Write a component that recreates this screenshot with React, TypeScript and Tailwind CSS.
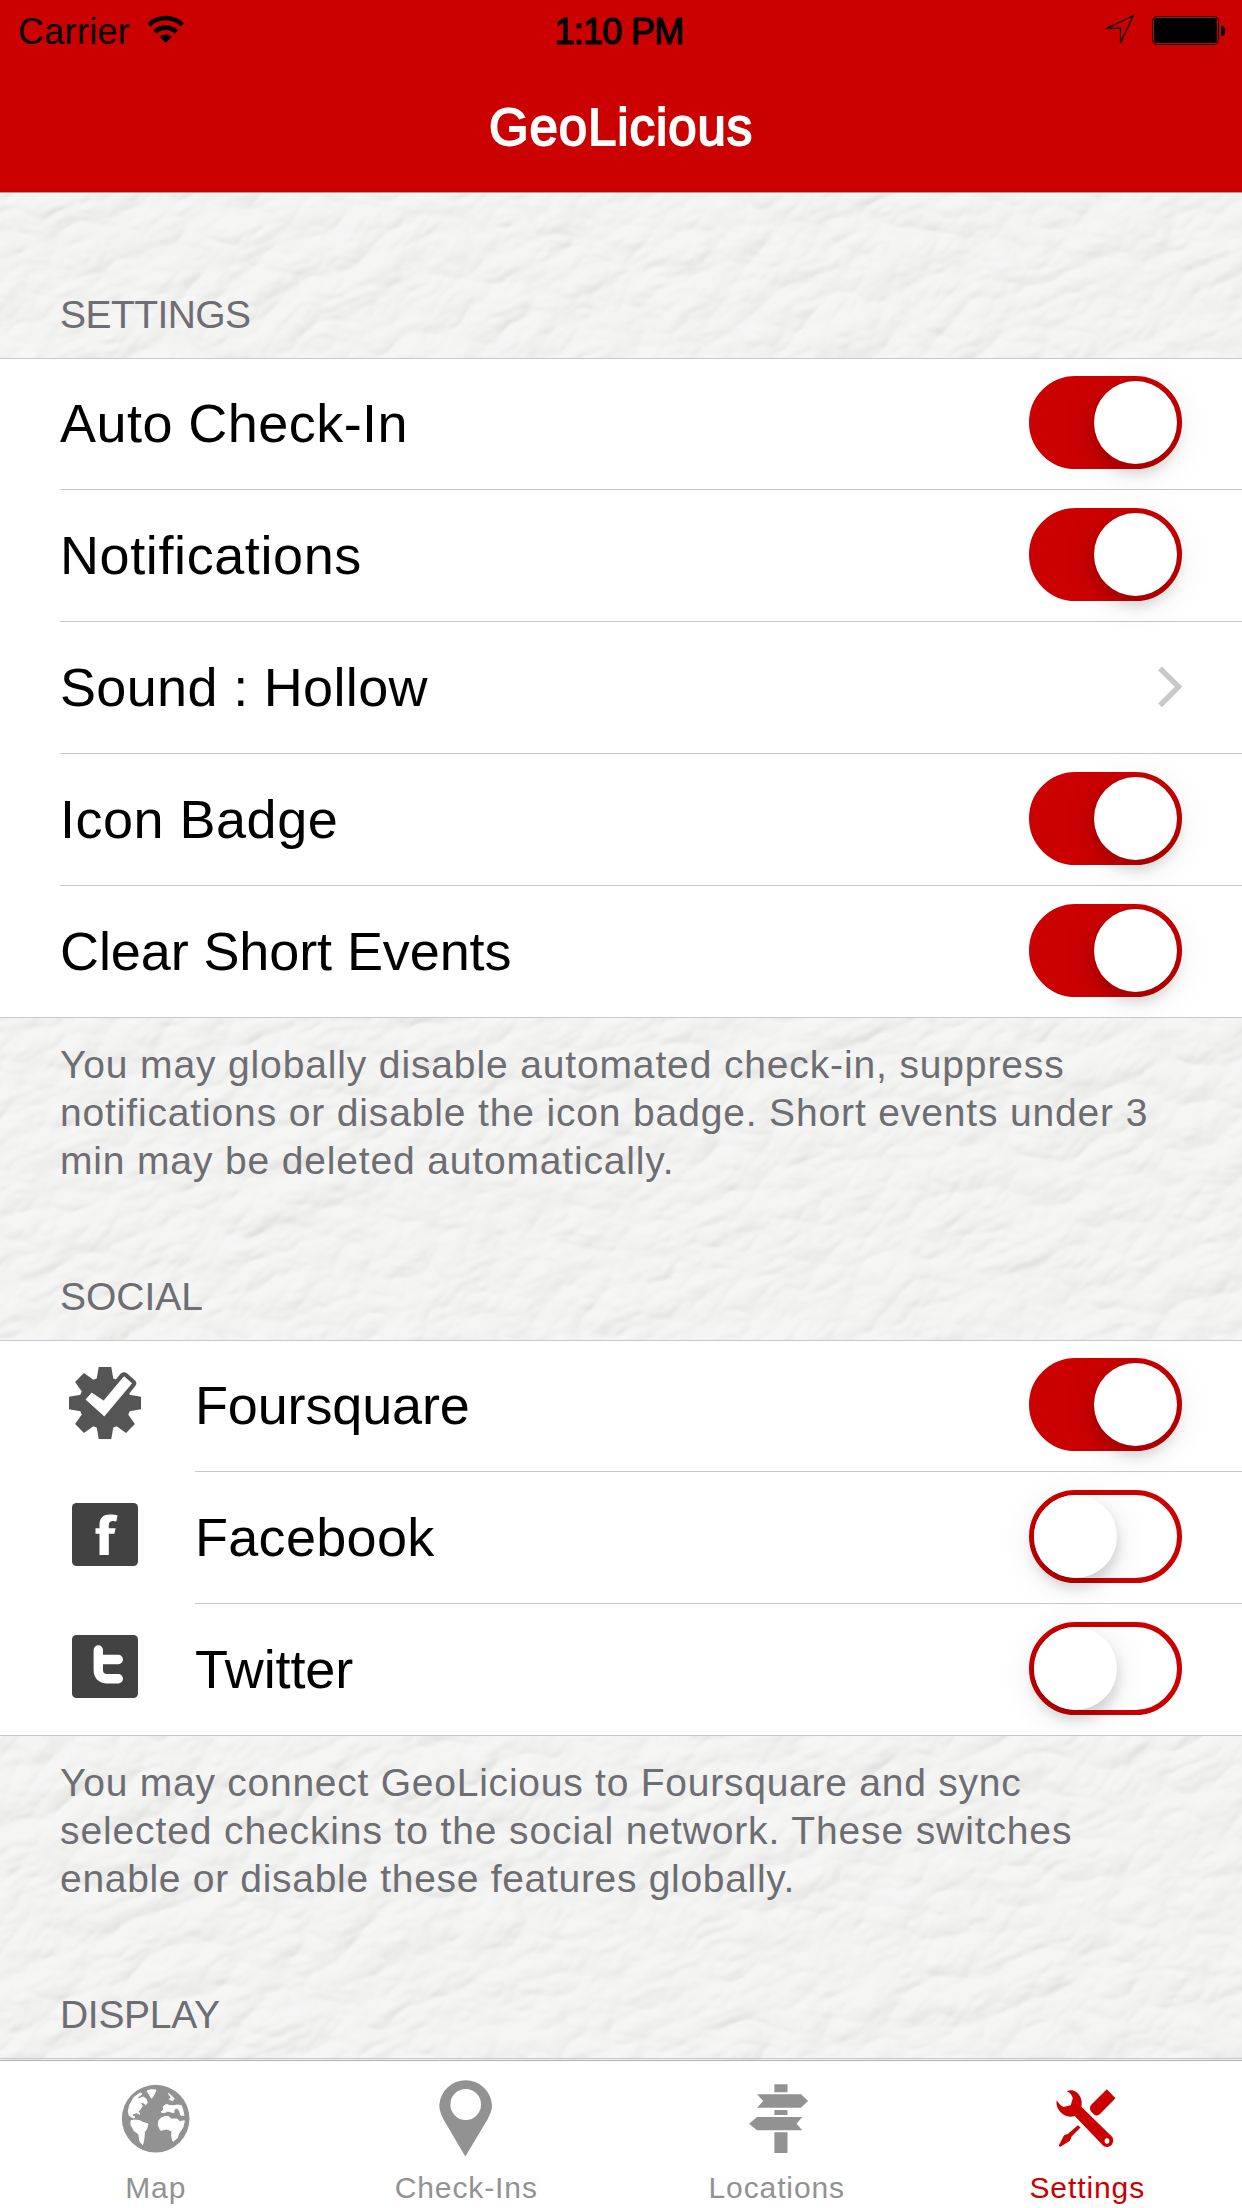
import { useState, type ReactNode } from "react";

function Leather() {
  return (
    <svg className="absolute inset-0 h-full w-full" aria-hidden="true">
      <defs>
        <filter id="leather" x="0" y="0" width="100%" height="100%" colorInterpolationFilters="sRGB">
          <feTurbulence type="turbulence" baseFrequency="0.013 0.022" numOctaves={3} seed={7} result="noise" />
          <feGaussianBlur in="noise" stdDeviation="1.4" />
          <feDiffuseLighting surfaceScale={4.5} diffuseConstant={1.0} lightingColor="#feffff">
            <feDistantLight azimuth={265} elevation={70} />
          </feDiffuseLighting>
        </filter>
      </defs>
      <rect width="100%" height="100%" fill="#f4f4f3" />
      <g transform="rotate(-22 621 1104)" opacity="0.22">
        <rect x="-500" y="-300" width="2300" height="2900" filter="url(#leather)" />
      </g>
    </svg>
  );
}

function StatusBar() {
  return (
    <div className="flex h-[60px] items-start justify-between text-4xl leading-[44px] text-black">
      <div className="flex w-[414px] pl-[18px] pt-[10px]">
        <span className="tracking-[0.3px]">Carrier</span>
        <svg className="ml-[17px] mt-[5px]" width="38" height="30" viewBox="0 0 38 30" fill="none">
          <path d="M2 9.9A23.7 23.7 0 0 1 35.4 9.9" stroke="#000" strokeWidth="4.6" />
          <path d="M8 17A15.2 15.2 0 0 1 29.4 17" stroke="#000" strokeWidth="4.6" />
          <path d="M12.6 21.8A9.5 9.5 0 0 1 24.8 21.8L18.7 28Z" fill="#000" />
        </svg>
      </div>
      <div className="w-[414px] pt-[10px] pr-1 text-center tracking-[-0.7px] [-webkit-text-stroke:1.2px_#000]">1:10 PM</div>
      <div className="flex w-[414px] justify-end pr-[17px]">
        <svg className="mt-[14px]" width="30" height="32" viewBox="0 0 30 32" fill="none">
          <path d="M28.3 1.8L1.6 14.4H15.5V29Z" stroke="#000" strokeWidth="1.2" />
        </svg>
        <div className="ml-[17px] mt-4 h-[29px] w-[67px] rounded-[5px] border border-black p-px">
          <div className="h-full w-full rounded-[3px] bg-black" />
        </div>
        <div className="ml-[2px] mt-[26px] h-[10px] w-1 rounded-r-full bg-black" />
      </div>
    </div>
  );
}

function Switch({ initial }: { initial: boolean }) {
  const [on, setOn] = useState(initial);
  return (
    <button
      role="switch"
      aria-checked={on}
      onClick={() => setOn(!on)}
      className={
        "mb-5 mr-[60px] flex h-[93px] w-[153px] shrink-0 items-center rounded-full border-[5px] border-[#cb0000] " +
        (on ? "justify-end bg-[#cb0000]" : "justify-start bg-white")
      }
    >
      <span className="block size-[83px] rounded-full bg-white shadow-[0_9px_14px_rgba(0,0,0,0.15),0_6px_36px_rgba(0,0,0,0.1)]" />
    </button>
  );
}

function Chevron() {
  return (
    <svg className="mb-[45px] mr-[59px]" width="26" height="42" viewBox="0 0 26 42" fill="none">
      <path d="M3 2.3L21.5 20.8L3 39.3" stroke="#c7c7cc" strokeWidth="5.4" />
    </svg>
  );
}

function Row({ icon, label, labelClass, control, first, last }: {
  icon?: ReactNode;
  label: string;
  labelClass: string;
  control: ReactNode;
  first?: boolean;
  last?: boolean;
}) {
  return (
    <div className={"flex bg-white " + (first ? "h-[131px] " : "h-[132px] ") + (last ? "border-b border-[#c8c7cc]" : "")}>
      <div className={"flex shrink-0 items-end " + (icon ? "w-[195px] pl-[69px]" : "w-[60px]")}>{icon}</div>
      <div className={"flex flex-1 items-end justify-between " + (last ? "" : "border-b border-[#c8c7cc]")}>
        <span className={"pb-[35px] text-[54px] leading-[62px] whitespace-nowrap text-black " + labelClass}>{label}</span>
        {control}
      </div>
    </div>
  );
}

function SectionTitle({ className, children }: { className: string; children: ReactNode }) {
  return (
    <h2 className={"flex items-end border-b border-[#c8c7cc] pb-[20px] pl-[60px] text-[39px] leading-[46px] text-[#6d6d72] " + className}>
      {children}
    </h2>
  );
}

function Footnote({ children }: { children: ReactNode }) {
  return (
    <div className="flex h-[192px] flex-col pl-[60px] pt-[23px] text-[39px] leading-[48px] whitespace-nowrap text-[#6d6d72]">
      {children}
    </div>
  );
}

function FoursquareIcon() {
  const tooth = "M-8.5-23L-6.3-36H6.3L8.5-23Z";
  return (
    <svg className="mb-[33px]" width="72" height="72" viewBox="0 0 72 72" fill="#555">
      <g transform="translate(36 36)">
        <circle r="26" />
        <path d={tooth} />
        <path d={tooth} transform="rotate(90)" />
        <path d={tooth} transform="rotate(135)" />
        <path d={tooth} transform="rotate(180)" />
        <path d={tooth} transform="rotate(225)" />
        <path d={tooth} transform="rotate(270)" />
        <path d={tooth} transform="rotate(315)" />
      </g>
      <path d="M34.7 34L55 9.7L62.7 16.3L44 40Z" stroke="#555" strokeWidth="9" strokeLinejoin="round" />
      <path d="M17 32.5L22.7 26L34.7 34L55 9.7L62.7 16.3L35.3 49Z" fill="#fff" stroke="#fff" strokeWidth="0.8" strokeLinejoin="round" />
    </svg>
  );
}

function FacebookIcon() {
  return (
    <svg className="mb-[38px] ml-[3px]" width="66" height="63" viewBox="0 0 66 63">
      <rect width="66" height="63" rx="4.5" fill="#424242" />
      <path d="M27.5 52V30.8H23.5V25.3H27.5V22C27.5 14.5 31.5 11.5 38 11.5C41 11.5 44 11.8 45.6 12.6L44.3 18.5C41.5 17.6 36.8 17.2 36.8 22.4V25.3H43.6L42.4 30.8H36.8V52Z" fill="#fff" />
    </svg>
  );
}

function TwitterIcon() {
  return (
    <svg className="mb-[37px] ml-[3px]" width="66" height="63" viewBox="0 0 66 63" fill="none">
      <rect width="66" height="63" rx="4.5" fill="#424242" />
      <path d="M26.3 15V35C26.3 40.5 29.5 43.7 35 43.7H46.3M26.3 24.5H46.3" stroke="#fff" strokeWidth="9.4" strokeLinecap="round" />
    </svg>
  );
}

function GlobeIcon() {
  return (
    <svg width="88" height="88" viewBox="0 0 264 264">
      <circle cx="134" cy="131" r="101.5" fill="#929292" />
      <g fill="#fff" stroke="#fff" strokeWidth="3" strokeLinejoin="round" transform="translate(3 0)">
        <path d="M49 110L53 90L66 67L84 54L90 57L78 66L75 73L86 69L94 66L103 73L106 84L101 89L94 83L84 82L91 92L84 104L79 109L83 118L74 113L60 118L62 123L69 126L64 129L52 122Z" />
        <path d="M105 48L118 44L132 45L127 57L119 70L113 60Z" />
        <path d="M57 137L68 135L84 137L92 142L108 147L103 164L97 171L96 190L92 209L84 200L80 177L67 168L57 150Z" />
        <path d="M169 55L180 64L187 71L182 77L172 73L177 67Z" />
        <path d="M147 111L155 104L154 94L163 88L174 92L186 92L196 90L208 92L212 104L216 122L206 120L203 108L194 99L186 104L186 113L176 111L168 108L157 113Z" />
        <path d="M146 130L160 124L170 125L178 132L196 132L203 140L217 137L213 156L200 176L195 190L183 199L179 184L180 168L164 162L146 166L139 152L140 138Z" />
      </g>
    </svg>
  );
}

function PinIcon() {
  return (
    <svg width="88" height="88" viewBox="0 0 88 88">
      <path transform="translate(0 -0.5)" fillRule="evenodd" fill="#929292" d="M43.3 82L21.5 45C18.8 39.5 17.3 35 17.3 30.5A26.4 26.4 0 0 1 70 30.5C70 35 68.3 39.5 65.5 45ZM43.7 14.5A15.3 15.5 0 1 0 43.7 45.5A15.3 15.5 0 1 0 43.7 14.5Z" />
    </svg>
  );
}

function SignpostIcon() {
  return (
    <svg width="88" height="88" viewBox="0 0 88 88" fill="#929292">
      <g transform="translate(1.2 0)">
        <path d="M41.2 9.3H54.3V17.3H41.2ZM41.2 35H54.3V40H41.2ZM41.2 57.3H54.3V78H41.2Z" />
        <path d="M23.8 19.3H67.8L74.9 26L67.8 32.7H23.8L30 26Z" />
        <path d="M69 42H23.8L15.9 48.7L23.8 55.3H69L63.4 48.7Z" />
      </g>
    </svg>
  );
}

function ToolsIcon() {
  return (
    <svg width="88" height="88" viewBox="0 0 88 88" fill="#cb0000">
      <path fillRule="evenodd" d="M23.8 16.2C27 14.6 30.5 15 33.5 17.2C37.5 20.2 39.6 25.5 38.4 31.7L69.3 62C71.5 66 69.5 71.5 64.5 72C62.5 72.2 61 71.5 59.8 70.3L31.7 41C28 42.2 24.5 41.8 21.3 40C16 37 12.5 31 13.7 25.2C15 27.5 17.5 30.5 20.5 32L27.7 30.2L29.8 23.2C29 20 27 17.6 23.8 16.2ZM64 63.2A2.4 2.8 0 1 0 64 68.8A2.4 2.8 0 1 0 64 63.2Z" />
      <path d="M63.8 14.3L72.5 23.3L57 39C55.5 40.5 53 41 51.2 39.7L47.7 36C46.7 34 46.6 31.8 48 30Z" />
      <path d="M34.9 50.2L37.5 52.5L28.4 61.7C28 64.5 27 66 25 67L17 72L15.8 70.5L20 62.3C20.8 60.3 22 59.6 24.4 59.3Z" />
    </svg>
  );
}

function Tab({ icon, label, active }: { icon: ReactNode; label: string; active?: boolean }) {
  return (
    <div className={"flex flex-1 flex-col items-center pt-[14px] " + (active ? "text-[#cb0000]" : "text-[#929292]")}>
      {icon}
      <span className="mt-[7px] pl-px text-3xl leading-[36px] tracking-[0.9px]">{label}</span>
    </div>
  );
}

export default function App() {
  return (
    <div className="relative isolate h-[2208px] w-[1242px] overflow-hidden bg-[#f2f3f2] font-['Liberation_Sans',Arial,sans-serif]">
      <div className="absolute inset-0 -z-10">
        <Leather />
      </div>

      <header className="h-[193px] border-b border-[#a3a3a3] bg-[#cb0000]">
        <StatusBar />
        <h1 className="pt-[38px] text-center text-[51px] leading-[60px] tracking-[0.9px] text-white [-webkit-text-stroke:1.8px_#fff]">GeoLicious</h1>
      </header>

      <SectionTitle className="h-[166px] tracking-[-0.57px]">SETTINGS</SectionTitle>
      <Row first label="Auto Check-In" labelClass="tracking-[0.45px]" control={<Switch initial />} />
      <Row label="Notifications" labelClass="tracking-[0.6px]" control={<Switch initial />} />
      <Row label="Sound : Hollow" labelClass="tracking-[0.33px]" control={<Chevron />} />
      <Row label="Icon Badge" labelClass="tracking-[0.5px]" control={<Switch initial />} />
      <Row last label="Clear Short Events" labelClass="tracking-[-0.1px]" control={<Switch initial />} />
      <Footnote>
        <span className="tracking-[0.86px]">You may globally disable automated check-in, suppress</span>
        <span className="tracking-[0.85px]">notifications or disable the icon badge. Short events under 3</span>
        <span className="tracking-[0.84px]">min may be deleted automatically.</span>
      </Footnote>

      <SectionTitle className="h-[131px]">SOCIAL</SectionTitle>
      <Row first icon={<FoursquareIcon />} label="Foursquare" labelClass="tracking-[-0.15px]" control={<Switch initial />} />
      <Row icon={<FacebookIcon />} label="Facebook" labelClass="tracking-[0.3px]" control={<Switch initial={false} />} />
      <Row last icon={<TwitterIcon />} label="Twitter" labelClass="tracking-[-0.15px]" control={<Switch initial={false} />} />
      <Footnote>
        <span className="tracking-[0.76px]">You may connect GeoLicious to Foursquare and sync</span>
        <span className="tracking-[0.88px]">selected checkins to the social network. These switches</span>
        <span className="tracking-[0.69px]">enable or disable these features globally.</span>
      </Footnote>

      <SectionTitle className="h-[131px] tracking-[-0.3px]">DISPLAY</SectionTitle>

      <nav className="mt-px flex h-[148px] border-t border-[#b2b2b2] bg-white">
        <Tab icon={<GlobeIcon />} label="Map" />
        <Tab icon={<PinIcon />} label="Check-Ins" />
        <Tab icon={<SignpostIcon />} label="Locations" />
        <Tab icon={<ToolsIcon />} label="Settings" active />
      </nav>
    </div>
  );
}
